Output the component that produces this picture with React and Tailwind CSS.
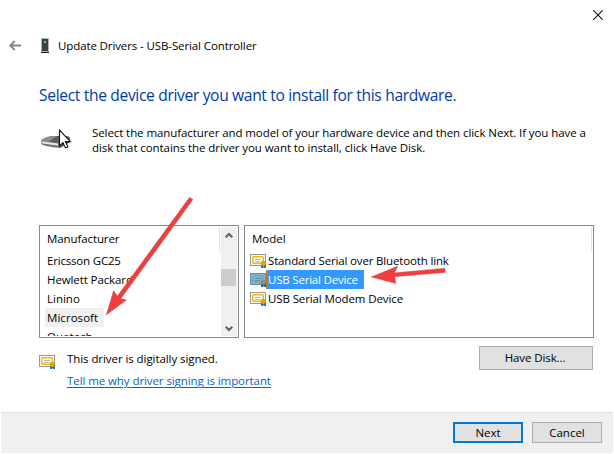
import React from "react";

const manufacturers = [
  { name: "Ericsson GC25", cls: "tracking-[-0.19px]" },
  { name: "Hewlett Packard", cls: "tracking-[-0.1px]" },
  { name: "Linino", cls: "tracking-[0px]" },
  { name: "Microsoft", cls: "tracking-[0.05px]", current: true },
  { name: "Quatech", cls: "tracking-[0px]" },
];

const models = [
  { name: "Standard Serial over Bluetooth link", cls: "tracking-[-0.16px]" },
  { name: "USB Serial Device", cls: "tracking-[-0.2px]", selected: true },
  { name: "USB Serial Modem Device", cls: "tracking-[-0.11px]" },
];

function CertIcon({ selected }) {
  const frame = selected ? "#6290b8" : "#999";
  const paper = selected ? "#7fb4e2" : "#fafafa";
  const gold = selected ? "#83a89a" : "#efb90c";
  const seal = selected ? "#7f9468" : "#e3a300";
  const ribbon = selected ? "#1d63ab" : "#1976c5";
  return (
    <svg className="block shrink-0" width="16" height="14" viewBox="0 0 16 14">
      <rect x="0.5" y="0.5" width="15" height="11" fill={paper} stroke={frame} />
      <rect x="2.7" y="2.7" width="10.6" height="6.6" rx="1" fill={paper} stroke={gold} strokeWidth="1.4" />
      <path d="M5 5.5h6M5 7.5h5" stroke={selected ? "#5d8fbd" : "#bdbdbd"} />
      <path d="M11 10h5v4h-1.7l-.8-1-.8 1H11z" fill={ribbon} />
      <circle cx="13.2" cy="9.3" r="2.6" fill={seal} />
    </svg>
  );
}

function Chevron({ up }) {
  return (
    <svg className="block" width="8" height="7" viewBox="0 0 8 7">
      <path d={up ? "M0.7 5.3 4 2l3.3 3.3" : "M0.7 1.7 4 5l3.3-3.3"} fill="none" stroke="#606060" strokeWidth="2" />
    </svg>
  );
}

export default function App() {
  return (
    <div className="relative flex h-[454px] w-[614px] flex-col overflow-hidden bg-white font-['Open_Sans','Noto_Sans',sans-serif] text-[11.5px] whitespace-nowrap text-black">
      <div className="flex h-[30px] shrink-0 justify-end pt-[10px] pr-[11px]">
        <svg width="10" height="10" viewBox="0 0 10 10">
          <path d="M0.3 0.3 9.7 9.7M9.7 0.3 0.3 9.7" stroke="#111" strokeWidth="1.1" />
        </svg>
      </div>

      <header className="flex h-[31px] shrink-0 items-center pl-[9px]">
        <svg width="12" height="11" viewBox="0 0 12 11">
          <path d="M12 5.5H1.2M5.7 1 1.2 5.5 5.7 10" fill="none" stroke="#858585" strokeWidth="1.8" />
        </svg>
        <svg className="ml-5" width="8" height="15" viewBox="0 0 8 15">
          <rect x="0.5" y="0.5" width="7" height="13" fill="#444" stroke="#b5b5b5" />
          <rect x="1" y="1" width="6" height="12" fill="#404040" />
          <rect x="3" y="3" width="2" height="2" fill="#3df53d" />
          <rect x="0" y="13" width="8" height="1" fill="#aaa" />
          <rect x="0" y="14" width="8" height="1" fill="#222" />
        </svg>
        <h1 className="ml-[9px] tracking-[-0.11px]">Update Drivers - USB-Serial Controller</h1>
      </header>

      <h2 className="h-[64px] shrink-0 pt-[22px] pl-[39px] text-[15.6px] leading-6 tracking-[-0.34px] text-[#003aa8]">
        Select the device driver you want to install for this hardware.
      </h2>

      <div className="flex h-[100px] shrink-0 pl-[40px]">
        <svg className="mt-[4px] block shrink-0" width="32" height="22" viewBox="0 0 32 22">
          <path d="M1 12q1-3 11-5h13q5 0 5 2v4l-10 6Q9 18 2.500 16 1 15 1 12z" fill="#777" />
          <path d="M2 11.500q3-3 11-4.500h12q4 0 4 2l-10 5z" fill="#5c5f5e" />
          <path d="M2 11.500q3-3 11-4.500h4L8 12.500z" fill="#8f9291" />
          <path d="M1.500 12.200 18 14.400v2.200L2.500 14.500z" fill="#e6e6e6" />
          <path d="M18.500 14.400 30 9.500V13l-10 5.500z" fill="#4a4a4a" />
          <path d="M19.500 1v16l3.500-3.400 2.400 5.300 2.500-1-2.500-5.300h5z" fill="white" stroke="#12121c" strokeWidth="1.1" />
        </svg>
        <p className="ml-5 w-[510px] leading-[15px]">
          <span className="block tracking-[-0.085px]">Select the manufacturer and model of your hardware device and then click Next. If you have a</span>
          <span className="block tracking-[-0.075px]">disk that contains the driver you want to install, click Have Disk.</span>
        </p>
      </div>

      <div className="ml-[39px] flex h-[113px] shrink-0 gap-[5px]">
        <div className="flex w-[200px] border border-[#828790] pr-px">
          <div className="flex min-w-0 flex-1 flex-col overflow-hidden">
            <div className="flex h-[25px] shrink-0 items-center justify-between pl-[7px]">
              <span className="tracking-[-0.1px]">Manufacturer</span>
              <span className="mr-px h-6 w-px self-end bg-[#e2e2e2]" />
            </div>
            <div className="mb-px overflow-hidden pl-[5px]">
              {manufacturers.map((m) => (
                <div key={m.name} className="flex h-[19px]">
                  <span className={`flex items-center pl-[2px] ${m.current ? "w-[59px] bg-[#f0f0f0]" : ""} ${m.cls}`}>{m.name}</span>
                </div>
              ))}
            </div>
          </div>
          <div className="my-px flex w-4 flex-col items-center bg-[#f0f0f0] pt-[5px] pb-[4px]">
            <Chevron up />
            <div className="mt-[30px] h-[17px] w-[15px] self-start bg-[#cdcdcd]" />
            <div className="flex-1" />
            <Chevron />
          </div>
        </div>

        <div className="w-[350px] border border-[#828790]">
          <div className="flex h-[25px] items-center justify-between pr-px pl-[7px]">
            <span>Model</span>
            <span className="h-6 w-px self-end bg-[#e2e2e2]" />
          </div>
          <div className="pl-[5px]">
            {models.map((m) => (
              <div key={m.name} className="flex h-[19px] items-start">
                <div className="pt-[3px]"><CertIcon selected={m.selected} /></div>
                <span
                  className={`flex h-[19px] items-center pl-px ${m.cls} ${
                    m.selected
                      ? "w-[98px] border border-dotted border-[#d67518] bg-[#3399ff] text-white"
                      : "border border-transparent"
                  }`}
                >
                  {m.name}
                </span>
              </div>
            ))}
          </div>
        </div>
      </div>

      <div className="flex h-[74px] shrink-0 pl-[39px]">
        <div className="pt-[17px]"><CertIcon /></div>
        <div className="ml-3 flex flex-1 flex-col pt-[13px]">
          <span className="h-[22px] leading-[16px] tracking-[-0.07px]">This driver is digitally signed.</span>
          <a className="self-start leading-[16px] tracking-[-0.08px] text-[#0066cc] underline underline-offset-2">
            Tell me why driver signing is important
          </a>
        </div>
        <button className="mt-2 mr-[21px] h-6 w-[114px] border border-[#adadad] bg-[#e1e1e1] pr-[2px] tracking-[-0.1px]">Have Disk...</button>
      </div>

      <footer className="mx-px flex h-[41px] shrink-0 justify-end gap-[9px] border-t border-[#dfdfdf] bg-[#f0f0f0] pt-[9px] pr-[11px]">
        <button className="flex h-[21px] w-[70px] items-center justify-center border-2 border-[#0078d7] bg-[#e1e1e1]">Next</button>
        <button className="flex h-[21px] w-[70px] items-center justify-center border border-[#adadad] bg-[#e1e1e1]">Cancel</button>
      </footer>

      <svg className="pointer-events-none absolute inset-0" width="614" height="454" viewBox="0 0 614 454">
        <g fill="#f23d3d" stroke="#b96464" strokeWidth="0.4">
          <path d="M189.5 197.2 193 199.6 121 298.6 126.5 300 106.2 315 113.6 290.5 117.4 296z" />
          <path d="M371 277 398 266 394.5 272.8 445 268.2 445.4 272.5 394.7 276.8 396 283.5z" />
        </g>
      </svg>
    </div>
  );
}
